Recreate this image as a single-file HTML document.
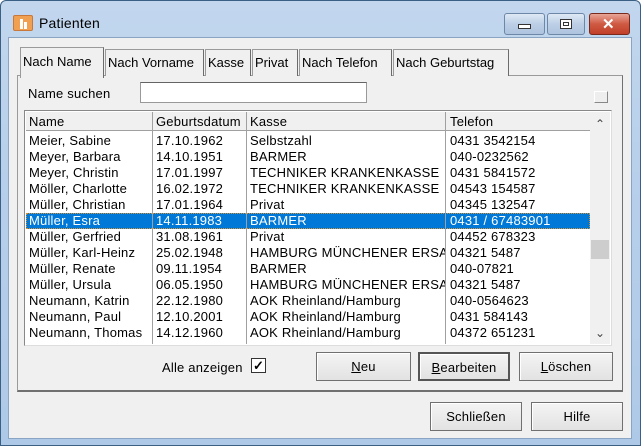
<!DOCTYPE html><html><head><style>
*{box-sizing:border-box;margin:0;padding:0}
body{width:641px;height:446px;overflow:hidden;font-family:"Liberation Sans",sans-serif;font-size:13px;letter-spacing:0.2px;color:#000;background:#fff}
.win{position:absolute;left:0;top:0;width:641px;height:446px;background:linear-gradient(#c2d7ee,#b7cfea 40%,#aec9e8);border:1px solid #3c5f84;border-radius:6px 6px 0 0}
.client{position:absolute;left:8px;top:37px;width:624px;height:402px;background:#f0f0f0;border:1px solid #8aa5c4}
.abs{position:absolute}
.tb{position:absolute;top:12px;height:22px;border:1px solid #6d87a7;border-radius:3px;background:linear-gradient(#dfe9f5,#bccfe6 50%,#aec3df)}
.tab{position:absolute;top:49px;height:27px;border:1px solid #9a9a9a;border-bottom:none;background:#f0f0f0;padding:5px 2px 0;white-space:nowrap;border-right-color:#6b6b6b;letter-spacing:0}
.btn{position:absolute;height:29px;border:1px solid #707070;background:linear-gradient(#f4f4f4,#e2e2e2);text-align:center;line-height:27px;box-shadow:inset 1px 1px #fff}
.row{position:absolute;left:26px;width:564px;height:16px;line-height:16px;white-space:nowrap}
.row span{position:absolute;top:0;overflow:hidden;height:16px}
.c1{left:3px;width:124px}.c2{left:130px;width:92px}.c3{left:224px;width:195px}.c4{left:424px;width:140px}
.vl{position:absolute;top:112px;height:232px;width:1px;background:#a0a0a0}
</style></head><body>
<div class="win">
<div class="abs" style="left:12px;top:14px;width:20px;height:16px;background:#f0a050;border:1px solid #c8783a;border-radius:2px"><div class="abs" style="left:6px;top:3px;width:3px;height:10px;background:#fff"></div><div class="abs" style="left:10px;top:6px;width:3px;height:7px;background:#fff"></div></div>
<div class="abs" style="left:38px;top:14px;font-size:14px">Patienten</div>
<div class="tb" style="left:503px;width:41px"><div class="abs" style="left:13px;top:10px;width:13px;height:5px;border:1px solid #333;background:#fff"></div></div>
<div class="tb" style="left:546px;width:38px"><div class="abs" style="left:12px;top:5px;width:12px;height:10px;border:1px solid #333;background:#fff"><div class="abs" style="left:2px;top:2px;width:6px;height:4px;border:1px solid #333"></div></div></div>
<div class="tb" style="left:588px;width:41px;background:linear-gradient(#e8a598,#cf5a43 50%,#c13f28);border-color:#7a2a1c"><div class="abs" style="left:12px;top:1px;color:#fff;font-weight:bold;font-size:15px">✕</div></div>
</div>
<div class="client"></div>
<div class="abs" style="left:17px;top:75px;width:606px;height:317px;border:1px solid #9a9a9a;border-right-color:#707070;border-bottom:2px solid #707070;background:#f0f0f0"></div>
<div class="tab" style="left:105px;width:99px">Nach Vorname</div>
<div class="tab" style="left:205px;width:46px">Kasse</div>
<div class="tab" style="left:252px;width:46px">Privat</div>
<div class="tab" style="left:299px;width:93px">Nach Telefon</div>
<div class="tab" style="left:393px;width:116px">Nach Geburtstag</div>
<div class="tab" style="left:20px;top:47px;width:84px;height:31px;z-index:2;padding-top:6px">Nach Name</div>
<div class="abs" style="left:28px;top:86px">Name suchen</div>
<div class="abs" style="left:140px;top:82px;width:227px;height:21px;background:#fff;border:1px solid #999;border-top-color:#646464"></div>
<div class="abs" style="left:594px;top:91px;width:14px;height:12px;border:1px solid #888;border-top-color:#fff;border-left-color:#fff;background:#eee"></div>
<div class="abs" style="left:24px;top:110px;width:588px;height:236px;background:#fff;border:1px solid #888;border-right-color:#ddd;border-bottom-color:#ddd"></div>
<div class="abs" style="left:26px;top:112px;width:564px;height:19px;background:#f0f0f0;border-bottom:1px solid #a0a0a0"></div>
<div class="abs" style="left:590px;top:112px;width:20px;height:232px;background:#f0f0f0"></div>
<div class="abs" style="left:595px;top:117px;font-size:12px;color:#444">&#8963;</div>
<div class="abs" style="left:595px;top:326px;font-size:12px;color:#444">&#8964;</div>
<div class="abs" style="left:591px;top:240px;width:18px;height:19px;background:#cdcdcd"></div>
<div class="abs" style="left:26px;top:213px;width:564px;height:16px;background:#0078d7;border:1px dotted #d79030"></div>
<div class="vl" style="left:152px"></div><div class="vl" style="left:246px"></div><div class="vl" style="left:445px"></div>
<div class="row" style="top:114px"><span class="c1">Name</span><span class="c2">Geburtsdatum</span><span class="c3">Kasse</span><span class="c4">Telefon</span></div>
<div class="row" style="top:133px"><span class="c1">Meier, Sabine</span><span class="c2">17.10.1962</span><span class="c3">Selbstzahl</span><span class="c4">0431 3542154</span></div>
<div class="row" style="top:149px"><span class="c1">Meyer, Barbara</span><span class="c2">14.10.1951</span><span class="c3">BARMER</span><span class="c4">040-0232562</span></div>
<div class="row" style="top:165px"><span class="c1">Meyer, Christin</span><span class="c2">17.01.1997</span><span class="c3">TECHNIKER KRANKENKASSE</span><span class="c4">0431 5841572</span></div>
<div class="row" style="top:181px"><span class="c1">Möller, Charlotte</span><span class="c2">16.02.1972</span><span class="c3">TECHNIKER KRANKENKASSE</span><span class="c4">04543 154587</span></div>
<div class="row" style="top:197px"><span class="c1">Müller, Christian</span><span class="c2">17.01.1964</span><span class="c3">Privat</span><span class="c4">04345 132547</span></div>
<div class="row" style="top:213px;color:#fff"><span class="c1">Müller, Esra</span><span class="c2">14.11.1983</span><span class="c3">BARMER</span><span class="c4">0431 / 67483901</span></div>
<div class="row" style="top:229px"><span class="c1">Müller, Gerfried</span><span class="c2">31.08.1961</span><span class="c3">Privat</span><span class="c4">04452 678323</span></div>
<div class="row" style="top:245px"><span class="c1">Müller, Karl-Heinz</span><span class="c2">25.02.1948</span><span class="c3">HAMBURG MÜNCHENER ERSATZ</span><span class="c4">04321 5487</span></div>
<div class="row" style="top:261px"><span class="c1">Müller, Renate</span><span class="c2">09.11.1954</span><span class="c3">BARMER</span><span class="c4">040-07821</span></div>
<div class="row" style="top:277px"><span class="c1">Müller, Ursula</span><span class="c2">06.05.1950</span><span class="c3">HAMBURG MÜNCHENER ERSATZ</span><span class="c4">04321 5487</span></div>
<div class="row" style="top:293px"><span class="c1">Neumann, Katrin</span><span class="c2">22.12.1980</span><span class="c3">AOK Rheinland/Hamburg</span><span class="c4">040-0564623</span></div>
<div class="row" style="top:309px"><span class="c1">Neumann, Paul</span><span class="c2">12.10.2001</span><span class="c3">AOK Rheinland/Hamburg</span><span class="c4">0431 584143</span></div>
<div class="row" style="top:325px"><span class="c1">Neumann, Thomas</span><span class="c2">14.12.1960</span><span class="c3">AOK Rheinland/Hamburg</span><span class="c4">04372 651231</span></div>
<div class="abs" style="left:162px;top:360px">Alle anzeigen</div>
<div class="abs" style="left:251px;top:358px;width:15px;height:15px;background:#fff;border:1px solid #333;font-size:13px;line-height:13px;text-align:center;font-weight:bold">✓</div>
<div class="btn" style="left:316px;top:352px;width:95px"><u>N</u>eu</div>
<div class="btn" style="left:418px;top:352px;width:92px;border:2px solid #555"><u>B</u>earbeiten</div>
<div class="btn" style="left:519px;top:352px;width:94px"><u>L</u>öschen</div>
<div class="btn" style="left:430px;top:402px;width:92px">Schließen</div>
<div class="btn" style="left:531px;top:402px;width:92px">Hilfe</div>
</body></html>
